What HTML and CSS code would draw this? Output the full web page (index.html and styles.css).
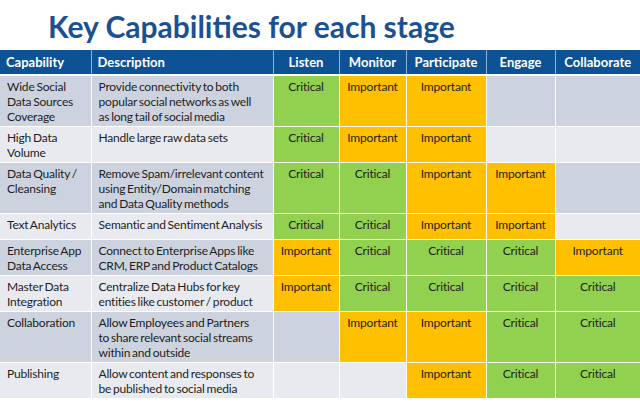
FILE: index.html
```html
<!DOCTYPE html>
<html>
<head>
<meta charset="utf-8">
<link rel="stylesheet" href="styles.css">
</head>
<body>
<h1 class="title">Key Capabilities for each stage</h1>
<table class="grid">
  <colgroup>
    <col class="c-cap"><col class="c-desc"><col class="c-listen"><col class="c-monitor"><col class="c-part"><col class="c-engage"><col class="c-collab">
  </colgroup>
  <thead>
    <tr>
      <th class="left">Capability</th>
      <th class="left">Description</th>
      <th>Listen</th>
      <th>Monitor</th>
      <th>Participate</th>
      <th>Engage</th>
      <th>Collaborate</th>
    </tr>
  </thead>
  <tbody>
    <tr class="odd h3">
      <td>Wide Social<br>Data Sources<br>Coverage</td>
      <td>Provide connectivity to both<br>popular social networks as well<br>as long tail of social media</td>
      <td class="crit">Critical</td>
      <td class="imp">Important</td>
      <td class="imp">Important</td>
      <td></td>
      <td></td>
    </tr>
    <tr class="even h2">
      <td>High Data<br>Volume</td>
      <td>Handle large raw data sets</td>
      <td class="crit">Critical</td>
      <td class="imp">Important</td>
      <td class="imp">Important</td>
      <td></td>
      <td></td>
    </tr>
    <tr class="odd h3">
      <td>Data Quality /<br>Cleansing</td>
      <td>Remove Spam/irrelevant content<br>using Entity/Domain matching<br>and Data Quality methods</td>
      <td class="crit">Critical</td>
      <td class="crit">Critical</td>
      <td class="imp">Important</td>
      <td class="imp">Important</td>
      <td></td>
    </tr>
    <tr class="even h1">
      <td>Text Analytics</td>
      <td>Semantic and Sentiment Analysis</td>
      <td class="crit">Critical</td>
      <td class="crit">Critical</td>
      <td class="imp">Important</td>
      <td class="imp">Important</td>
      <td></td>
    </tr>
    <tr class="odd h2">
      <td>Enterprise App<br>Data Access</td>
      <td>Connect to Enterprise Apps like<br>CRM, ERP and Product Catalogs</td>
      <td class="imp">Important</td>
      <td class="crit">Critical</td>
      <td class="crit">Critical</td>
      <td class="crit">Critical</td>
      <td class="imp">Important</td>
    </tr>
    <tr class="even h2">
      <td>Master Data<br>Integration</td>
      <td>Centralize Data Hubs for key<br>entities like customer / product</td>
      <td class="imp">Important</td>
      <td class="crit">Critical</td>
      <td class="crit">Critical</td>
      <td class="crit">Critical</td>
      <td class="crit">Critical</td>
    </tr>
    <tr class="odd h3">
      <td>Collaboration</td>
      <td>Allow Employees and Partners<br>to share relevant social streams<br>within and outside</td>
      <td></td>
      <td class="imp">Important</td>
      <td class="imp">Important</td>
      <td class="crit">Critical</td>
      <td class="crit">Critical</td>
    </tr>
    <tr class="even h2">
      <td>Publishing</td>
      <td>Allow content and responses to<br>be published to social media</td>
      <td></td>
      <td></td>
      <td class="imp">Important</td>
      <td class="crit">Critical</td>
      <td class="crit">Critical</td>
    </tr>
  </tbody>
</table>
</body>
</html>
```

FILE: styles.css
```css
html, body {
  margin: 0;
  padding: 0;
  background: #ffffff;
}
body {
  width: 640px;
  height: 405px;
  overflow: hidden;
  font-family: Lato, "Open Sans", sans-serif;
}
.title {
  margin: 0;
  height: 50px;
  box-sizing: border-box;
  padding: 9px 0 0 48px;
  font-size: 30px;
  line-height: 34px;
  font-weight: 700;
  color: #1b5192;
  white-space: nowrap;
}
.grid {
  width: 640px;
  border-collapse: collapse;
  table-layout: fixed;
}
.c-cap { width: 91px; }
.c-desc { width: 182px; }
.c-listen { width: 66px; }
.c-monitor { width: 67px; }
.c-part { width: 80px; }
.c-engage { width: 69px; }
.c-collab { width: 85px; }

.grid th {
  height: 24px;
  padding: 0 6px;
  background: #0e5296;
  color: #ffffff;
  font-size: 13px;
  font-weight: 700;
  text-align: center;
  border-left: 1px solid #8fb0d6;
  border-bottom: 2px solid #ffffff;
  white-space: nowrap;
}
.grid th:first-child { border-left: none; }
.grid th.left { text-align: left; }

.grid td {
  padding: 3px 0 0 7px;
  vertical-align: top;
  font-size: 12px;
  letter-spacing: -0.2px;
  word-spacing: -1px;
  line-height: 15px;
  color: #1e1e1e;
  white-space: nowrap;
  overflow: hidden;
  border: 1px solid #ffffff;
  border-top: none;
}
.grid td:first-child { border-left: none; }
.grid td:last-child { border-right: none; }
.odd td { background: #ccd3df; }
.even td { background: #e8eaf0; }
.grid td.crit { background: #92d050; text-align: center; padding-left: 0; }
.grid td.imp { background: #ffc000; text-align: center; padding-left: 0; }
.h3 td { height: 47px; }
.h2 td { height: 32px; }
.h1 td { height: 22px; }
```
